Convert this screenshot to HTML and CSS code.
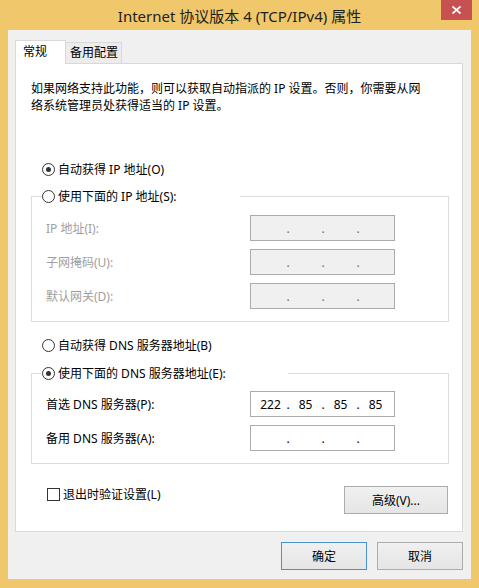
FILE: index.html
```html
<!DOCTYPE html>
<html lang="zh-CN">
<head>
  <meta charset="UTF-8">
  <title>Internet 协议版本 4 (TCP/IPv4) 属性</title>
  <link rel="stylesheet" href="styles.css">
</head>
<body>
  <div class="window">
    <div class="titlebar">
      <span></span>
      <span class="title">Internet 协议版本 4 (TCP/IPv4) 属性</span>
      <span class="close">
        <svg width="9" height="8" viewBox="0 0 9 8"><path d="M0.5 0.5 L8.5 7.5 M8.5 0.5 L0.5 7.5" stroke="#fff" stroke-width="1.8" fill="none"/></svg>
      </span>
    </div>

    <div class="client">
      <div class="tabs">
        <div class="tab active">常规</div>
        <div class="tab">备用配置</div>
      </div>

      <div class="panel">
        <p class="desc">如果网络支持此功能，则可以获取自动指派的 IP 设置。否则，你需要从网<br>络系统管理员处获得适当的 IP 设置。</p>

        <div class="option first"><span class="radio checked"></span>自动获得 IP 地址(O)</div>
        <fieldset class="group">
          <legend class="legend-ip"><span class="option"><span class="radio"></span>使用下面的 IP 地址(S):</span></legend>
          <div class="fields">
            <span class="disabled">IP 地址(I):</span>
            <div class="ipbox off"><span class="oct"></span><span class="dot">.</span><span class="oct"></span><span class="dot">.</span><span class="oct"></span><span class="dot">.</span><span class="oct"></span></div>
            <span class="disabled">子网掩码(U):</span>
            <div class="ipbox off"><span class="oct"></span><span class="dot">.</span><span class="oct"></span><span class="dot">.</span><span class="oct"></span><span class="dot">.</span><span class="oct"></span></div>
            <span class="disabled">默认网关(D):</span>
            <div class="ipbox off"><span class="oct"></span><span class="dot">.</span><span class="oct"></span><span class="dot">.</span><span class="oct"></span><span class="dot">.</span><span class="oct"></span></div>
          </div>
        </fieldset>

        <div class="option dns-auto"><span class="radio"></span>自动获得 DNS 服务器地址(B)</div>
        <fieldset class="group dns">
          <legend class="legend-dns"><span class="option"><span class="radio checked"></span>使用下面的 DNS 服务器地址(E):</span></legend>
          <div class="fields">
            <span>首选 DNS 服务器(P):</span>
            <div class="ipbox"><span class="oct">222</span><span class="dot">.</span><span class="oct">85</span><span class="dot">.</span><span class="oct">85</span><span class="dot">.</span><span class="oct">85</span></div>
            <span>备用 DNS 服务器(A):</span>
            <div class="ipbox"><span class="oct"></span><span class="dot">.</span><span class="oct"></span><span class="dot">.</span><span class="oct"></span><span class="dot">.</span><span class="oct"></span></div>
          </div>
        </fieldset>

        <div class="bottom-row">
          <div class="check-row"><span class="checkbox"></span>退出时验证设置(L)</div>
          <button class="btn advanced">高级(V)...</button>
        </div>
      </div>

      <div class="footer">
        <button class="btn default">确定</button>
        <button class="btn">取消</button>
      </div>
    </div>
  </div>
</body>
</html>
```

FILE: styles.css
```css
body {
  margin: 0;
  font-family: "Noto Sans", "Noto Sans CJK SC", sans-serif;
  font-size: 12px;
  color: #000;
}

.window {
  width: 479px;
  height: 588px;
  background-color: #f0c86b;
  display: flex;
  flex-direction: column;
}

.titlebar {
  height: 30px;
  display: grid;
  grid-template-columns: 1fr auto 1fr;
  align-items: start;
}
.title {
  font-size: 15px;
  line-height: 20px;
  margin-top: 6px;
  color: #1e1e1e;
}
.close {
  justify-self: end;
  margin-right: 7px;
  width: 31px;
  height: 20px;
  background-color: #c75050;
  display: flex;
  align-items: center;
  justify-content: center;
}

.client {
  flex: 1;
  margin: 0 8px 9px;
  padding: 10px 8px 0 7px;
  background-color: #f0f0f0;
  display: flex;
  flex-direction: column;
}

.tabs {
  display: flex;
  align-items: flex-end;
  height: 23px;
}
.tab {
  box-sizing: border-box;
  border: 1px solid #d9d9d9;
  border-bottom: none;
  line-height: 17px;
  height: 21px;
  padding: 1px 3px 0 4px;
  margin-left: -1px;
  background-color: #ececec;
}
.tab.active {
  height: 24px;
  margin: 0 0 -1px 0;
  padding: 2px 18px 0 7px;
  background-color: #fff;
  position: relative;
  z-index: 1;
}

.panel {
  box-sizing: border-box;
  background-color: #fff;
  border: 1px solid #d9d9d9;
  padding: 16px 13px 17px 15px;
}
.desc {
  margin: 0;
  line-height: 17px;
}

.option {
  display: flex;
  align-items: center;
  gap: 3px;
  line-height: 17px;
}
.option.first {
  margin: 47px 0 0 11px;
}
.option.dns-auto {
  margin: 15px 0 0 11px;
}
.radio {
  box-sizing: border-box;
  width: 13px;
  height: 13px;
  border: 1px solid #333;
  border-radius: 50%;
  background-color: #fff;
  display: inline-flex;
  align-items: center;
  justify-content: center;
}
.radio.checked::after {
  content: "";
  width: 5px;
  height: 5px;
  border-radius: 50%;
  background-color: #333;
}

.group {
  margin: 10px 0 0;
  padding: 10px 0 12px;
  border: 1px solid #dcdcdc;
  min-inline-size: auto;
}
.group.dns {
  margin-top: 11px;
  padding-top: 9px;
}
.group legend {
  padding: 0;
  margin-left: 10px;
}
.legend-ip {
  width: 198px;
}
.legend-dns {
  width: 246px;
}

.fields {
  display: grid;
  grid-template-columns: 204px 145px;
  row-gap: 8px;
  align-items: center;
  padding-left: 14px;
  line-height: 17px;
}
.disabled {
  color: #a0a0a0;
}

.ipbox {
  box-sizing: border-box;
  height: 26px;
  border: 1px solid #ababab;
  background-color: #fff;
  display: flex;
  align-items: center;
  padding-left: 4px;
}
.ipbox.off {
  background-color: #f0f0f0;
  color: #6d6d6d;
}
.oct {
  width: 31px;
  text-align: center;
}
.dot {
  width: 4px;
  text-align: center;
}

.bottom-row {
  display: flex;
  justify-content: space-between;
  align-items: flex-start;
  margin: 22px 1px 0 0;
}
.check-row {
  display: flex;
  align-items: center;
  gap: 3px;
  line-height: 17px;
  padding-left: 16px;
}
.checkbox {
  box-sizing: border-box;
  width: 13px;
  height: 13px;
  border: 1px solid #333;
  background-color: #fff;
}

.btn {
  box-sizing: border-box;
  width: 86px;
  height: 28px;
  padding: 0;
  border: 1px solid #acacac;
  background: linear-gradient(#f0f0f0, #e5e5e5);
  font: inherit;
  color: #000;
}
.btn.advanced {
  width: 104px;
}
.btn.default {
  border-color: #4a90d9;
}

.footer {
  display: flex;
  justify-content: flex-end;
  gap: 10px;
  margin-top: 10px;
}
```
